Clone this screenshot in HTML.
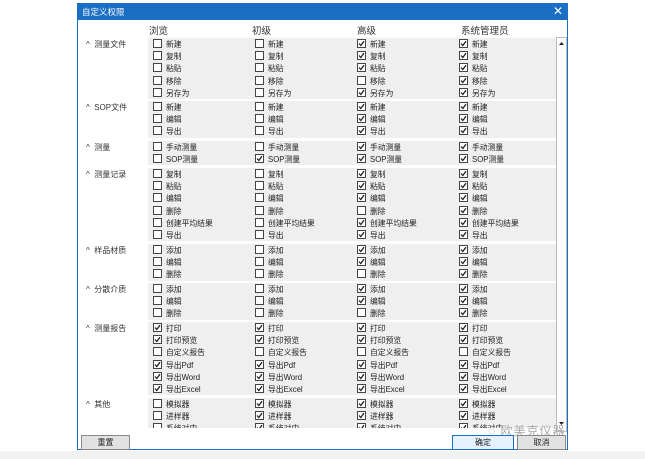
<!DOCTYPE html><html><head><meta charset="utf-8"><style>
*{margin:0;padding:0;box-sizing:border-box}
body{width:645px;height:459px;background:#fff;position:relative;overflow:hidden;font-family:"Liberation Sans","Noto Sans CJK SC",sans-serif;font-size:8px;color:#222}
.dlg{position:absolute;left:77px;top:3px;width:491px;height:447px;border:1px solid #1a6fc4;background:#fff}
.tb{position:absolute;left:0;top:0;width:100%;height:16px;background:#1a6fc4;color:#fff;font-size:8.5px;line-height:16px;padding-left:4px}
.x{position:absolute;right:4px;top:0;font-size:12px;line-height:15px}
.hd{position:absolute;top:19px;font-size:9.5px;color:#333}
.view{position:absolute;left:0;top:33px;width:478px;height:391px;overflow:hidden}
.g{position:absolute;left:70px;width:408px;background:#efefef}
.cat{position:absolute;left:-62px;top:1px;font-size:8px;color:#333;white-space:nowrap}
.r{position:relative;height:12.2px}
.i{position:absolute;top:1px;height:11px;line-height:10px;white-space:nowrap;font-size:7.8px}
.c{display:inline-block;width:9px;height:9px;border:1px solid #444;background:#fff;vertical-align:-1px;margin-right:4px;position:relative}
.c svg{position:absolute;left:0;top:0}
.i0{left:5px}.i1{left:107px}.i2{left:209px}.i3{left:311px}
.sb{position:absolute;left:478px;top:33px;width:11px;height:395px;border:1px solid #bbb;background:#fff}
.btn{position:absolute;top:431px;height:15px;border:1px solid #888;background:#e1e1e1;font-size:8px;line-height:13px;text-align:center}
.wm{position:absolute;left:410px;top:418px;font-size:12px;color:#aaa;letter-spacing:1px}
.bot{position:absolute;left:0;top:451px;width:645px;height:8px;background:#f2f2f2}
</style></head><body>
<div class="dlg">
<div class="tb">自定义权限<span class="x">✕</span></div>
<div class="hd" style="left:71px">浏览</div>
<div class="hd" style="left:174px">初级</div>
<div class="hd" style="left:279px">高级</div>
<div class="hd" style="left:383px">系统管理员</div>
<div class="view" id="v">
<div class="g" style="top:1px"><div class="cat">^&nbsp; 测量文件</div>
<div class="r"><span class="i i0"><i class="c"></i>新建</span><span class="i i1"><i class="c"></i>新建</span><span class="i i2"><i class="c k"></i>新建</span><span class="i i3"><i class="c k"></i>新建</span></div>
<div class="r"><span class="i i0"><i class="c"></i>复制</span><span class="i i1"><i class="c"></i>复制</span><span class="i i2"><i class="c k"></i>复制</span><span class="i i3"><i class="c k"></i>复制</span></div>
<div class="r"><span class="i i0"><i class="c"></i>粘贴</span><span class="i i1"><i class="c"></i>粘贴</span><span class="i i2"><i class="c k"></i>粘贴</span><span class="i i3"><i class="c k"></i>粘贴</span></div>
<div class="r"><span class="i i0"><i class="c"></i>移除</span><span class="i i1"><i class="c"></i>移除</span><span class="i i2"><i class="c"></i>移除</span><span class="i i3"><i class="c k"></i>移除</span></div>
<div class="r"><span class="i i0"><i class="c"></i>另存为</span><span class="i i1"><i class="c"></i>另存为</span><span class="i i2"><i class="c k"></i>另存为</span><span class="i i3"><i class="c k"></i>另存为</span></div>
</div>
<div class="g" style="top:64px"><div class="cat">^&nbsp; SOP文件</div>
<div class="r"><span class="i i0"><i class="c"></i>新建</span><span class="i i1"><i class="c"></i>新建</span><span class="i i2"><i class="c k"></i>新建</span><span class="i i3"><i class="c k"></i>新建</span></div>
<div class="r"><span class="i i0"><i class="c"></i>编辑</span><span class="i i1"><i class="c"></i>编辑</span><span class="i i2"><i class="c k"></i>编辑</span><span class="i i3"><i class="c k"></i>编辑</span></div>
<div class="r"><span class="i i0"><i class="c"></i>导出</span><span class="i i1"><i class="c"></i>导出</span><span class="i i2"><i class="c k"></i>导出</span><span class="i i3"><i class="c k"></i>导出</span></div>
</div>
<div class="g" style="top:104px"><div class="cat">^&nbsp; 测量</div>
<div class="r"><span class="i i0"><i class="c"></i>手动测量</span><span class="i i1"><i class="c"></i>手动测量</span><span class="i i2"><i class="c k"></i>手动测量</span><span class="i i3"><i class="c k"></i>手动测量</span></div>
<div class="r"><span class="i i0"><i class="c"></i>SOP测量</span><span class="i i1"><i class="c k"></i>SOP测量</span><span class="i i2"><i class="c k"></i>SOP测量</span><span class="i i3"><i class="c k"></i>SOP测量</span></div>
</div>
<div class="g" style="top:131px"><div class="cat">^&nbsp; 测量记录</div>
<div class="r"><span class="i i0"><i class="c"></i>复制</span><span class="i i1"><i class="c"></i>复制</span><span class="i i2"><i class="c k"></i>复制</span><span class="i i3"><i class="c k"></i>复制</span></div>
<div class="r"><span class="i i0"><i class="c"></i>粘贴</span><span class="i i1"><i class="c"></i>粘贴</span><span class="i i2"><i class="c k"></i>粘贴</span><span class="i i3"><i class="c k"></i>粘贴</span></div>
<div class="r"><span class="i i0"><i class="c"></i>编辑</span><span class="i i1"><i class="c"></i>编辑</span><span class="i i2"><i class="c k"></i>编辑</span><span class="i i3"><i class="c k"></i>编辑</span></div>
<div class="r"><span class="i i0"><i class="c"></i>删除</span><span class="i i1"><i class="c"></i>删除</span><span class="i i2"><i class="c"></i>删除</span><span class="i i3"><i class="c k"></i>删除</span></div>
<div class="r"><span class="i i0"><i class="c"></i>创建平均结果</span><span class="i i1"><i class="c"></i>创建平均结果</span><span class="i i2"><i class="c k"></i>创建平均结果</span><span class="i i3"><i class="c k"></i>创建平均结果</span></div>
<div class="r"><span class="i i0"><i class="c"></i>导出</span><span class="i i1"><i class="c"></i>导出</span><span class="i i2"><i class="c k"></i>导出</span><span class="i i3"><i class="c k"></i>导出</span></div>
</div>
<div class="g" style="top:207px"><div class="cat">^&nbsp; 样品材质</div>
<div class="r"><span class="i i0"><i class="c"></i>添加</span><span class="i i1"><i class="c"></i>添加</span><span class="i i2"><i class="c k"></i>添加</span><span class="i i3"><i class="c k"></i>添加</span></div>
<div class="r"><span class="i i0"><i class="c"></i>编辑</span><span class="i i1"><i class="c"></i>编辑</span><span class="i i2"><i class="c k"></i>编辑</span><span class="i i3"><i class="c k"></i>编辑</span></div>
<div class="r"><span class="i i0"><i class="c"></i>删除</span><span class="i i1"><i class="c"></i>删除</span><span class="i i2"><i class="c"></i>删除</span><span class="i i3"><i class="c k"></i>删除</span></div>
</div>
<div class="g" style="top:246px"><div class="cat">^&nbsp; 分散介质</div>
<div class="r"><span class="i i0"><i class="c"></i>添加</span><span class="i i1"><i class="c"></i>添加</span><span class="i i2"><i class="c k"></i>添加</span><span class="i i3"><i class="c k"></i>添加</span></div>
<div class="r"><span class="i i0"><i class="c"></i>编辑</span><span class="i i1"><i class="c"></i>编辑</span><span class="i i2"><i class="c k"></i>编辑</span><span class="i i3"><i class="c k"></i>编辑</span></div>
<div class="r"><span class="i i0"><i class="c"></i>删除</span><span class="i i1"><i class="c"></i>删除</span><span class="i i2"><i class="c"></i>删除</span><span class="i i3"><i class="c k"></i>删除</span></div>
</div>
<div class="g" style="top:285px"><div class="cat">^&nbsp; 测量报告</div>
<div class="r"><span class="i i0"><i class="c k"></i>打印</span><span class="i i1"><i class="c k"></i>打印</span><span class="i i2"><i class="c k"></i>打印</span><span class="i i3"><i class="c k"></i>打印</span></div>
<div class="r"><span class="i i0"><i class="c k"></i>打印预览</span><span class="i i1"><i class="c k"></i>打印预览</span><span class="i i2"><i class="c k"></i>打印预览</span><span class="i i3"><i class="c k"></i>打印预览</span></div>
<div class="r"><span class="i i0"><i class="c"></i>自定义报告</span><span class="i i1"><i class="c"></i>自定义报告</span><span class="i i2"><i class="c"></i>自定义报告</span><span class="i i3"><i class="c"></i>自定义报告</span></div>
<div class="r"><span class="i i0"><i class="c k"></i>导出Pdf</span><span class="i i1"><i class="c k"></i>导出Pdf</span><span class="i i2"><i class="c k"></i>导出Pdf</span><span class="i i3"><i class="c k"></i>导出Pdf</span></div>
<div class="r"><span class="i i0"><i class="c k"></i>导出Word</span><span class="i i1"><i class="c k"></i>导出Word</span><span class="i i2"><i class="c k"></i>导出Word</span><span class="i i3"><i class="c k"></i>导出Word</span></div>
<div class="r"><span class="i i0"><i class="c k"></i>导出Excel</span><span class="i i1"><i class="c k"></i>导出Excel</span><span class="i i2"><i class="c k"></i>导出Excel</span><span class="i i3"><i class="c k"></i>导出Excel</span></div>
</div>
<div class="g" style="top:361px;height:40px"><div class="cat">^&nbsp; 其他</div>
<div class="r"><span class="i i0"><i class="c"></i>模拟器</span><span class="i i1"><i class="c k"></i>模拟器</span><span class="i i2"><i class="c k"></i>模拟器</span><span class="i i3"><i class="c k"></i>模拟器</span></div>
<div class="r"><span class="i i0"><i class="c"></i>进样器</span><span class="i i1"><i class="c k"></i>进样器</span><span class="i i2"><i class="c k"></i>进样器</span><span class="i i3"><i class="c k"></i>进样器</span></div>
<div class="r"><span class="i i0"><i class="c"></i>系统对中</span><span class="i i1"><i class="c k"></i>系统对中</span><span class="i i2"><i class="c k"></i>系统对中</span><span class="i i3"><i class="c k"></i>系统对中</span></div>
</div>
</div>
<div class="sb"><svg width="9" height="393" style="position:absolute;left:0;top:0"><path d="M2 7 L4.5 4 L7 7Z" fill="#222"/><path d="M2 384 L4.5 387 L7 384Z" fill="#222"/></svg></div>
<div class="wm">◌ 欧美克仪器</div>
<div class="btn" style="left:3px;width:49px">重置</div>
<div class="btn" style="left:374px;width:62px;border-color:#1a6fc4;background:#e5f1fb">确定</div>
<div class="btn" style="left:439px;width:49px">取消</div>
</div>
<div class="bot"></div>
<script>
document.querySelectorAll('.c.k').forEach(function(e){e.innerHTML='<svg width="7" height="7" viewBox="0 0 7 7"><path d="M1 3.5 L2.8 5.5 L6 1.2" stroke="#222" stroke-width="1.3" fill="none"/></svg>';});
</script>
</body></html>
